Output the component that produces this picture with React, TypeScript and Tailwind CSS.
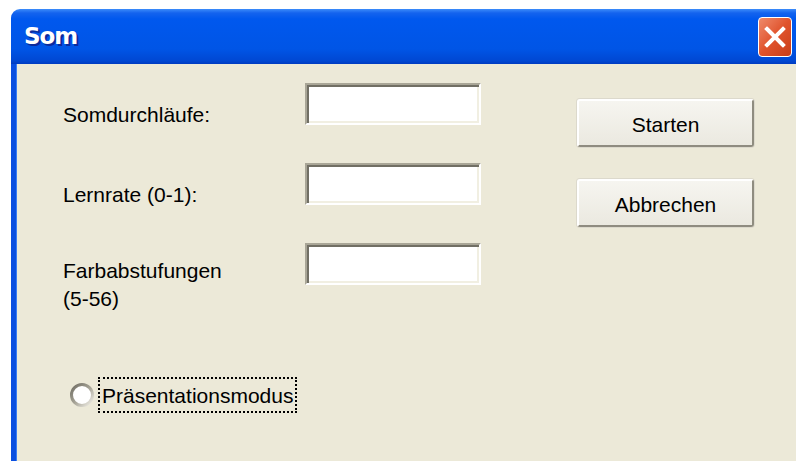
import React from 'react';

const FONT = { fontFamily: '"Liberation Sans", Arial, sans-serif' };

const TextField: React.FC = () => (
  <div className="h-[42px] w-[176px] shrink-0 border-2 border-t-[#A9A697] border-l-[#A9A697] border-b-white border-r-white bg-white shadow-[inset_2px_2px_0_#716F64,inset_-2px_-2px_0_#F1EFE2]" />
);

const Button: React.FC<{ label: string }> = ({ label }) => (
  <button
    className="flex h-[48px] w-[177px] items-center justify-center rounded-[3px] border-2 border-t-[#FFFFFF] border-l-[#FFFFFF] border-b-[#8F8C80] border-r-[#8F8C80] bg-gradient-to-b from-[#F6F5F0] to-[#EBE9E0] pt-[3px] text-[21px] text-black shadow-[0_0_0_1px_#DCD9CC]"
    style={FONT}
  >
    {label}
  </button>
);

const CloseButton: React.FC = () => (
  <div className="flex h-[40px] w-[34px] items-center justify-center rounded-[4px] border border-white bg-gradient-to-br from-[#EE8A6A] via-[#E0532C] to-[#C93D18]">
    <svg width="22" height="22" viewBox="0 0 22 22">
      <path d="M3 3 L19 19 M19 3 L3 19" stroke="white" strokeWidth="4" strokeLinecap="square" />
    </svg>
  </div>
);

const RadioDot: React.FC = () => (
  <svg width="24" height="24" viewBox="0 0 24 24">
    <defs>
      <linearGradient id="ring" x1="0" y1="0" x2="1" y2="1">
        <stop offset="0" stopColor="#6F6D63" />
        <stop offset="0.5" stopColor="#A5A295" />
        <stop offset="1" stopColor="#F4F2EA" />
      </linearGradient>
    </defs>
    <circle cx="12" cy="12" r="10.5" fill="white" stroke="url(#ring)" strokeWidth="3" />
  </svg>
);

export default function App() {
  return (
    <div className="flex h-[461px] w-[796px] overflow-hidden bg-white pl-[11px] pt-[9px]" style={FONT}>
      <div className="flex flex-1 flex-col overflow-hidden rounded-tl-[9px]">
        {/* caption bar */}
        <div className="flex h-[55px] items-center justify-between bg-[linear-gradient(to_bottom,#3C8CFA_0px,#1463EE_4px,#0058EE_10px,#0055E6_40px,#0047D2_52px,#003BC0_55px)] pl-[13px] pr-[4px]">
          <span
            className="font-bold tracking-[-1px] text-white [text-shadow:2px_2px_0_#0C2A9C]"
            style={{ fontFamily: '"DejaVu Sans", "Liberation Sans", sans-serif', fontSize: '23px' }}
          >
            Som
          </span>
          <CloseButton />
        </div>

        {/* dialog body */}
        <div className="flex flex-1 border-l-[5px] border-l-[#0A4FE0] bg-[#ECE9D8] shadow-[inset_1px_0_0_#3A7DF2]">
          <div className="flex flex-col pl-[47px] pt-[19px] text-[21px] leading-[28px] text-black">
            <div className="flex flex-col gap-[38px]">
              <div className="flex h-[42px]">
                <div className="w-[242px] shrink-0 pt-[18px]">Somdurchläufe:</div>
                <TextField />
              </div>
              <div className="flex h-[42px]">
                <div className="w-[242px] shrink-0 pt-[18px]">Lernrate (0-1):</div>
                <TextField />
              </div>
              <div className="flex h-[42px]">
                <div className="w-[242px] shrink-0 pt-[14px]">
                  Farbabstufungen
                  <br />
                  (5-56)
                </div>
                <TextField />
              </div>
            </div>

            <div className="mt-[92px] flex items-center gap-[4px] pl-[7px]">
              <RadioDot />
              <div className="flex h-[36px] items-center border-2 border-dotted border-black px-[2px] pt-[2px]">
                Präsentationsmodus
              </div>
            </div>
          </div>

          <div className="ml-[96px] flex flex-col gap-[32px] pt-[35px]">
            <Button label="Starten" />
            <Button label="Abbrechen" />
          </div>
        </div>
      </div>
    </div>
  );
}
